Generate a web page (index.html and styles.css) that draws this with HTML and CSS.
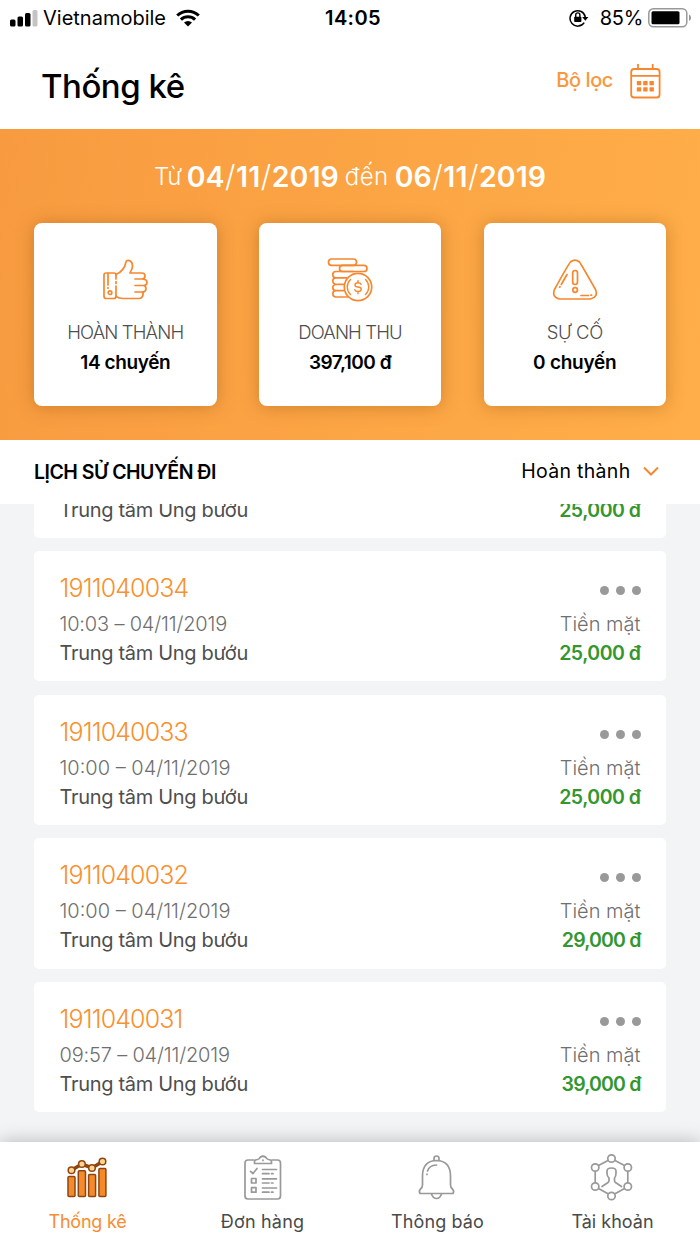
FILE: index.html
```html
<!DOCTYPE html>
<html lang="vi">
<head>
<meta charset="utf-8">
<title>Thống kê</title>
<link rel="stylesheet" href="styles.css">
</head>
<body>
<div class="app">
  <div class="status">
    <div class="status-left">
      <svg width="28" height="18" viewBox="0 0 28 18"><rect x="0" y="10.500" width="5.500" height="7" rx="1.500"/><rect x="7.500" y="7.500" width="5.500" height="10" rx="1.500"/><rect x="15" y="4" width="5.500" height="13.500" rx="1.500"/><rect x="22.500" y="1" width="5" height="16.500" rx="1.500" fill="#c4c4c4"/></svg>
      <span class="carrier">Vietnamobile</span>
      <svg class="wifi" width="24" height="18" viewBox="0 0 24 18"><g fill="none" stroke="#000" stroke-width="3"><path d="M1.200 6.500a15.600 15.600 0 0 1 21.600 0"/><path d="M4.900 10.600a10.200 10.200 0 0 1 14.200 0"/></g><path d="M8 13.500a6 6 0 0 1 8 0L12 17.500z"/></svg>
    </div>
    <div class="clock">14:05</div>
    <div class="status-right">
      <svg width="20" height="18" viewBox="0 0 20 18"><path d="M15.200 13.600A7.700 7.700 0 1 1 16.300 8" fill="none" stroke="#000" stroke-width="1.500"/><path d="M13.200 8h6.200l-3.100 3.800z"/><rect x="5.200" y="7.800" width="7.200" height="5.300" rx=".8"/><path d="M6.700 8.500V6a2.100 2.100 0 0 1 4.200 0v2.500" fill="none" stroke="#000" stroke-width="1.400"/></svg>
      <span class="percent">85%</span>
      <svg width="44" height="20" viewBox="0 0 44 20"><rect x=".8" y=".8" width="38" height="18" rx="4.500" fill="none" stroke="#999" stroke-width="1.500"/><rect x="3.500" y="3.300" width="28" height="13" rx="1.500"/><path d="M41 6.500a3.600 3.600 0 0 1 0 6.500z" fill="#999"/></svg>
    </div>
  </div>

  <header class="header">
    <h1 class="title">Thống kê</h1>
    <div class="filter">
      <span class="filter-label">Bộ lọc</span>
      <svg width="31" height="35" viewBox="0 0 31 35" fill="none" stroke="#f7872e" stroke-width="1.800"><rect x="1.200" y="5" width="28.400" height="28.500" rx="3"/><path d="M1.500 11.800h28M8 0v5M22.700 0v5"/><g fill="#f7872e" stroke="none"><rect x="6.800" y="17" width="4.400" height="4.200" rx=".5"/><rect x="13.200" y="17" width="4.400" height="4.200" rx=".5"/><rect x="19.500" y="17" width="4.400" height="4.200" rx=".5"/><rect x="6.800" y="23.300" width="4.400" height="4.200" rx=".5"/><rect x="13.200" y="23.300" width="4.400" height="4.200" rx=".5"/><rect x="19.500" y="23.300" width="4.400" height="4.200" rx=".5"/></g></svg>
    </div>
  </header>

  <section class="hero">
    <div class="range"><span class="word from">Từ</span><span class="date">04<i>/</i>11<i>/</i>2019</span><span class="word to">đến</span><span class="date">06<i>/</i>11<i>/</i>2019</span></div>
    <div class="cards">
      <div class="card">
        <svg width="46" height="42" viewBox="-1 0 46 42" class="line"><path d="M13 16Q13 14 11 14H3Q1 14 1 16V37Q1 39.500 3 39.500H11Q13 39.500 13 37"/><path d="M13 15.500C20 12.500 22 8 23 3C23.500 0 29.500 1 29.500 7Q29.500 10 27 14H39Q42 14 42 17Q42 20 39 20H32M39 20Q44 20 44 23.500Q44 26.500 40 26.500H32M40 26.500Q43 26.500 43 29.700Q43 33 39 33H32M39 33Q41 34 39.500 37.500Q38.500 39.500 36 39.500H20Q16 39.500 13 37.500M13 15.500V20M13 22.500V24.500M13 27V37M5 14.500V26M5 28.500V29.200"/><circle cx="7" cy="33.700" r="1.800"/></svg>
        <div class="card-label l1">HOÀN THÀNH</div>
        <div class="card-value v1">14 chuyến</div>
      </div>
      <div class="card">
        <svg width="46" height="44" viewBox="-.5 0 46 44" class="line"><rect x="1" y="1" width="28" height="6.300" rx="3.100"/><rect x="12" y="7.300" width="27.500" height="6.200" rx="3.100"/><path d="M26 13.500H8.500a3.100 3.100 0 0 0 0 6.400H19M8.500 19.900a3.100 3.100 0 0 0 0 6.400H16M8.500 26.300a3.100 3.100 0 0 0 0 6.400H16M8.500 32.700a3.100 3.100 0 0 0 0 6.300H20"/><circle cx="30.500" cy="29" r="13.700"/><path d="M23 21.500a10.300 10.300 0 0 0 0 15M38 21.500a10.300 10.300 0 0 1 0 15M30.500 22.500v2.200M30.500 33.500v2.200M33.600 26.300Q33 24.700 30.500 24.700Q27.500 24.700 27.500 27Q27.500 29 30.500 29Q33.700 29 33.700 31.300Q33.700 33.500 30.500 33.500Q28 33.500 27.300 31.700" stroke-width="1.400"/></svg>
        <div class="card-label l2">DOANH THU</div>
        <div class="card-value v2">397,100 đ</div>
      </div>
      <div class="card">
        <svg width="46" height="42" viewBox="-.5 0 46 42" class="line"><path d="M18 3Q22.500-.8 27 3Q28.500 5 43 30.500Q46 38 38 40H7Q-1 38 2 30.500Q16 5 18 3Z"/><rect x="20.200" y="11.500" width="4.800" height="14" rx="2.400"/><circle cx="22.600" cy="31" r="2.300"/><path d="M14.500 15.500L8.800 25.500M7.500 27.700L7.200 28.200M28.500 36.500H36M38.500 36.200h.6"/></svg>
        <div class="card-label l3">SỰ CỐ</div>
        <div class="card-value v3">0 chuyến</div>
      </div>
    </div>
  </section>

  <section class="section-head">
    <h2 class="section-title">LỊCH SỬ CHUYẾN ĐI</h2>
    <div class="select"><span>Hoàn thành</span>
      <svg width="16" height="10" viewBox="0 0 16 10" fill="none" stroke="#f7872e" stroke-width="2"><path d="M1 1.500l7 7 7-7"/></svg>
    </div>
  </section>

  <main class="list">
    <article class="trip partial">
      <div class="place">Trung tâm Ung bướu</div>
      <div class="price">25,000 đ</div>
    </article>
    <article class="trip">
      <div class="trip-info"><div class="code">1911040034</div><div class="time">10:03 – 04/11/2019</div><div class="place">Trung tâm Ung bướu</div></div>
      <div class="trip-pay"><div class="dots"><b></b><b></b><b></b></div><div class="method">Tiền mặt</div><div class="price">25,000 đ</div></div>
    </article>
    <article class="trip">
      <div class="trip-info"><div class="code">1911040033</div><div class="time wide">10:00 – 04/11/2019</div><div class="place">Trung tâm Ung bướu</div></div>
      <div class="trip-pay"><div class="dots"><b></b><b></b><b></b></div><div class="method">Tiền mặt</div><div class="price">25,000 đ</div></div>
    </article>
    <article class="trip">
      <div class="trip-info"><div class="code">1911040032</div><div class="time wide">10:00 – 04/11/2019</div><div class="place">Trung tâm Ung bướu</div></div>
      <div class="trip-pay"><div class="dots"><b></b><b></b><b></b></div><div class="method">Tiền mặt</div><div class="price tight">29,000 đ</div></div>
    </article>
    <article class="trip">
      <div class="trip-info"><div class="code">1911040031</div><div class="time">09:57 – 04/11/2019</div><div class="place">Trung tâm Ung bướu</div></div>
      <div class="trip-pay"><div class="dots"><b></b><b></b><b></b></div><div class="method">Tiền mặt</div><div class="price tight">39,000 đ</div></div>
    </article>
  </main>

  <nav class="tabs">
    <div class="tab active">
      <svg width="48" height="50" viewBox="0 0 48 50" fill="#f58a2b" stroke="#8f4510" stroke-width="1.500"><rect x="4" y="23.500" width="7" height="20" rx="1"/><rect x="14.300" y="17.800" width="7.200" height="25.700" rx="1"/><rect x="24.600" y="21.500" width="7" height="22" rx="1"/><rect x="34.900" y="15.500" width="7" height="28" rx="1"/><path d="M7.500 17.200L17.900 11L28 15L38.500 8.500" fill="none" stroke-width="3.500"/><g fill="#fcd390"><circle cx="7.500" cy="17.200" r="3.300"/><circle cx="17.900" cy="11" r="3.300"/><circle cx="28" cy="15" r="3.300"/><circle cx="38.500" cy="8.500" r="3.300"/></g></svg>
      <span class="t1">Thống kê</span>
    </div>
    <div class="tab">
      <svg width="48" height="50" viewBox="0 0 48 50" class="gray"><path d="M15 7H9Q6 7 6 10V43Q6 46 9 46H38.500Q41.500 46 41.500 43V10Q41.500 7 38.500 7H33"/><path d="M15.500 10.500V8.500Q15.500 6.800 18.500 6.500Q20.500 6 21 4.500Q24 2 27 4.500Q27.500 6 29.500 6.500Q32.500 6.800 32.500 8.500V10.500Z"/><path d="M24 7v.5M11.500 18.300L14 20.500L18 15.500M23.500 16.500H37.500M23.500 20.700H30M32.500 20.700H34M23.500 25.800H37.500M23.500 30H30M32.500 30H34M23.500 35H37.500M23.500 39.200H30M32.500 39.200H34M12.500 25.500H17V30H12.500ZM12.500 34.700H17V39.200H12.500Z"/></svg>
      <span class="t2">Đơn hàng</span>
    </div>
    <div class="tab">
      <svg width="48" height="50" viewBox="1 0 48 50" class="gray"><path d="M9.500 23Q9.500 8 23.500 7.500Q37.500 8 37.500 23V32Q37.500 34.500 39.500 36Q41.500 38 40 40.500H7Q5.500 38 7.500 36Q9.500 34.500 9.500 32Z"/><path d="M21 7.500V5.500Q21 3 23.500 3Q26 3 26 5.500V7.500M18.500 41Q20 45.500 23.500 45.500Q27 45.500 28.500 41M23.500 12Q16 12.500 14.500 18M14 21v.5"/></svg>
      <span class="t3">Thông báo</span>
    </div>
    <div class="tab">
      <svg width="48" height="50" viewBox="1 0 48 50" class="gray"><path d="M20 7.500L10.500 12.500M27 7.500L36.500 12.500M7.200 18V30M39.800 18V30M10.500 35.500L20 40.700M36.500 35.500L27 40.700M14 33.500L20 29.500Q21 28.800 21 27.500V25Q19 23.500 19 20V18Q19 15 23.500 15Q28 15 28 18V20Q28 23.500 26.500 25V27.500Q26.500 28.800 27.500 29.500L33.500 33.500"/><g fill="#fff"><circle cx="23.500" cy="5.500" r="3.700"/><circle cx="7.200" cy="14.500" r="3.700"/><circle cx="39.800" cy="14.500" r="3.700"/><circle cx="7.200" cy="33.500" r="3.700"/><circle cx="39.800" cy="33.500" r="3.700"/><circle cx="23.500" cy="43" r="3.700"/></g></svg>
      <span class="t4">Tài khoản</span>
    </div>
  </nav>
</div>
</body>
</html>
```
FILE: styles.css
```css
* { box-sizing: border-box; margin: 0; padding: 0; }
body { font-family: Inter, "Open Sans", sans-serif; background: #fff; }
.app { width: 700px; height: 1244px; display: flex; flex-direction: column; overflow: hidden; white-space: nowrap; }
svg { display: block; flex: none; }

.status { height: 38px; display: grid; grid-template-columns: 1fr auto 1fr; align-items: center; padding: 0 8px 2px 10px; font-size: 20px; line-height: 24px; }
.status-left { display: flex; align-items: center; }
.carrier { margin-left: 5px; }
.wifi { margin-left: 10px; }
.clock { font-weight: 600; letter-spacing: .4px; padding-left: 4px; }
.status-right { display: flex; align-items: center; justify-content: flex-end; }
.percent { margin: 0 5px 0 11px; letter-spacing: -.3px; }

.header { height: 90.500px; display: flex; justify-content: space-between; padding: 0 39px 0 41px; }
.title { font-size: 33px; line-height: 40px; font-weight: 500; margin-top: 28px; letter-spacing: -.5px; }
.filter { display: flex; margin-top: 26px; gap: 17px; color: #f9983d; }
.filter-label { font-size: 20px; line-height: 33px; font-weight: 500; letter-spacing: -.4px; }

.hero { height: 311.500px; background: linear-gradient(100deg, #f89b40, #ffae49); padding: 28.500px 34px 0; }
.range { height: 38px; display: flex; justify-content: center; align-items: center; color: #fff; line-height: 38px; }
.word { font-size: 24px; font-weight: 300; padding-top: 2px; }
.from { margin-right: 5px; letter-spacing: -.3px; }
.to { margin: 0 6px; letter-spacing: .5px; }
.date { font-size: 28.500px; font-weight: 600; }
.date i { font-style: normal; font-weight: 300; font-size: 30px; padding: 0 .6px; }
.cards { display: flex; justify-content: space-between; margin-top: 28px; }
.card { width: 182.500px; height: 183px; background: #fff; border-radius: 8px; box-shadow: 0 1px 18px rgba(125, 65, 0, .35); display: flex; flex-direction: column; align-items: center; padding-top: 35px; }
.card svg { height: 44px; }
.line { fill: none; stroke: #f7872e; stroke-width: 1.700; stroke-linecap: round; stroke-linejoin: round; }
.card-label { font-size: 18.500px; line-height: 24px; font-weight: 300; color: #4e4e4e; margin-top: 18px; }
.card-value { font-size: 19px; line-height: 24px; font-weight: 600; margin-top: 7px; }
.l1, .l2 { letter-spacing: -.85px; }
.l3 { letter-spacing: -.4px; }
.v1 { letter-spacing: -.4px; }
.v2 { letter-spacing: -.5px; }
.v3 { letter-spacing: -.25px; }

.section-head { height: 63.500px; flex: none; display: flex; justify-content: space-between; padding: 20px 41px 0 34px; background: #fff; }
.section-title { font-size: 19.500px; line-height: 24px; font-weight: 600; letter-spacing: -.5px; }
.select { display: flex; align-items: center; gap: 12.500px; height: 22px; font-size: 19.500px; line-height: 22px; letter-spacing: .3px; }

.list { flex: 1; background: #f3f4f6; overflow: hidden; padding: 0 34px; min-height: 0; }
.trip { height: 130.500px; margin-bottom: 13.170px; background: #fff; border-radius: 5px; display: flex; justify-content: space-between; padding: 19px 25.500px 0; }
.partial { height: 39.300px; margin-top: -5px; padding-top: 0; }
.code { font-size: 25px; line-height: 36px; font-weight: 300; color: #f8912f; letter-spacing: -.85px; }
.time, .method { font-size: 20px; line-height: 36px; font-weight: 300; color: #6f6f6f; }
.time { letter-spacing: -.18px; }
.wide { letter-spacing: 0; }
.place { font-size: 20px; line-height: 22px; font-weight: 400; color: #4e4e4e; letter-spacing: -.32px; }
.trip-pay { text-align: right; }
.dots { height: 36px; display: flex; justify-content: flex-end; gap: 7px; padding-top: 16px; margin-right: -.5px; }
.dots b { width: 9px; height: 9px; border-radius: 50%; background: #999; }
.price { font-size: 19.500px; line-height: 22px; font-weight: 600; color: #33962f; letter-spacing: -.5px; }
.price.tight { letter-spacing: -.85px; }

.tabs { height: 102px; flex: none; display: grid; grid-template-columns: repeat(4, 175px); background: #fff; box-shadow: 0 0 18px rgba(0, 0, 0, .26); position: relative; }
.tab { display: flex; flex-direction: column; align-items: center; padding-top: 11px; font-size: 18px; line-height: 22px; color: #4a4a4a; }
.tab span { margin-top: 8px; }
.t1 { letter-spacing: -.25px; }
.t2 { letter-spacing: .2px; }
.t3 { letter-spacing: .1px; }
.tab.active { color: #f88c30; }
.gray { fill: none; stroke: #999; stroke-width: 1.700; stroke-linecap: round; stroke-linejoin: round; }
```
